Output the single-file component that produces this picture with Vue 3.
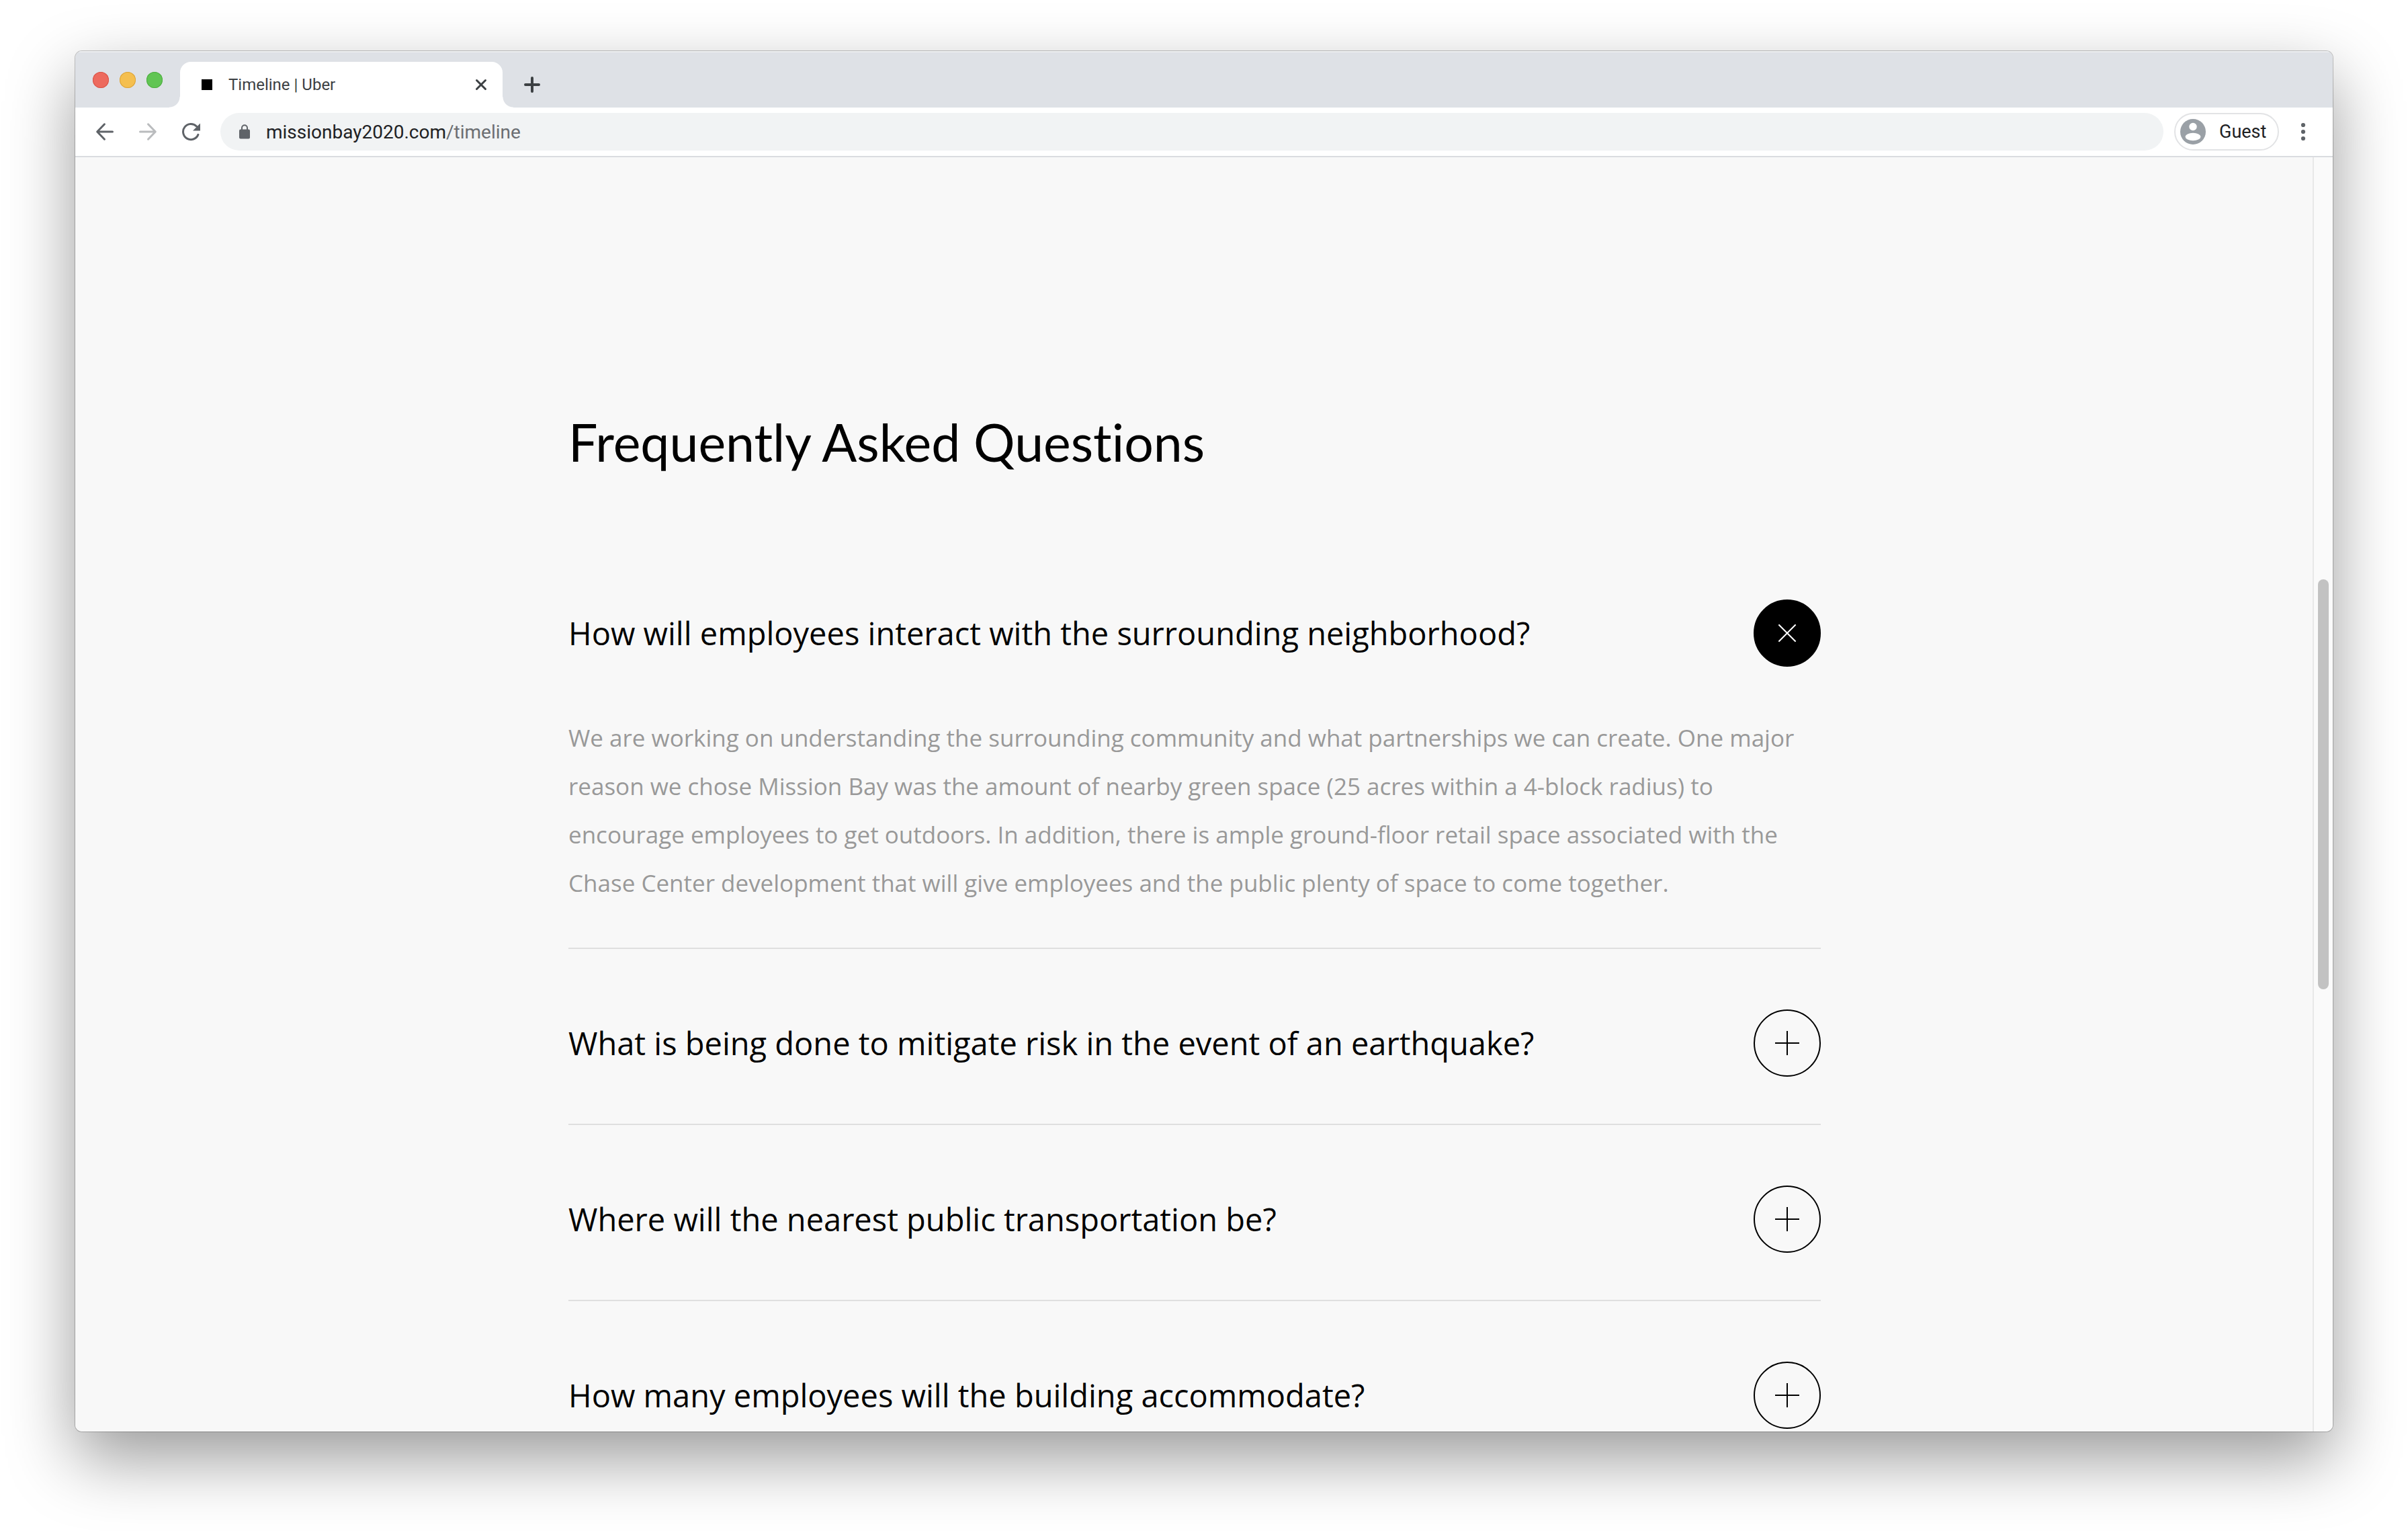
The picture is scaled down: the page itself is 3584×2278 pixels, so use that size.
<script setup>
import { ref } from 'vue'

const open = ref(0)
const items = [
  {
    question: 'How will employees interact with the surrounding neighborhood?',
    answer:
      'We are working on understanding the surrounding community and what partnerships we can create. One major reason we chose Mission Bay was the amount of nearby green space (25 acres within a 4-block radius) to encourage employees to get outdoors. In addition, there is ample ground-floor retail space associated with the Chase Center development that will give employees and the public plenty of space to come together.',
  },
  { question: 'What is being done to mitigate risk in the event of an earthquake?', answer: '' },
  { question: 'Where will the nearest public transportation be?', answer: '' },
  { question: 'How many employees will the building accommodate?', answer: '' },
]
function toggle(i) {
  open.value = open.value === i ? -1 : i
}
</script>

<template>
  <div class="desktop">
    <div class="window">
      <header class="tabstrip">
        <div class="lights">
          <button class="light red" aria-label="Close window"></button>
          <button class="light yellow" aria-label="Minimize window"></button>
          <button class="light green" aria-label="Zoom window"></button>
        </div>
        <div class="tab">
          <span class="favicon"></span>
          <span class="tab-title">Timeline | Uber</span>
          <button class="icon-btn" aria-label="Close tab">
            <svg width="20" height="20" viewBox="0 0 20 20"><path d="M3.500 3.500 16.500 16.500M16.500 3.500 3.500 16.500" stroke="#3c4043" stroke-width="3" stroke-linecap="round" /></svg>
          </button>
        </div>
        <button class="icon-btn new-tab" aria-label="New tab">
          <svg width="24" height="24" viewBox="0 0 24 24"><path d="M12 2V22M2 12H22" stroke="#3c4043" stroke-width="4" stroke-linecap="round" /></svg>
        </button>
      </header>

      <div class="toolbar">
        <nav class="nav">
          <button class="icon-btn" aria-label="Back">
            <svg width="28" height="28" viewBox="0 0 28 28" fill="none" stroke="#5f6368" stroke-width="3" stroke-linecap="round" stroke-linejoin="round"><path d="M25.500 14H3M13.500 2.800 2.700 14 13.500 25.200" /></svg>
          </button>
          <button class="icon-btn" aria-label="Forward">
            <svg width="28" height="28" viewBox="0 0 28 28" fill="none" stroke="#babcbe" stroke-width="3" stroke-linecap="round" stroke-linejoin="round"><path d="M2.500 14H25M14.500 2.800 25.300 14 14.500 25.200" /></svg>
          </button>
          <button class="icon-btn" aria-label="Reload">
            <svg width="28" height="28" viewBox="0 0 28 28"><path d="M22.500 6A11.600 11.600 0 1 0 24.900 18.400" fill="none" stroke="#5f6368" stroke-width="3" stroke-linecap="round" /><path d="M28 1.500V12.400H17Z" fill="#5f6368" /></svg>
          </button>
        </nav>
        <div class="omnibox">
          <svg width="16" height="22" viewBox="0 0 16 22"><rect y="7.500" width="16" height="14" rx="2" fill="#5f6368" /><path d="M4 9V5.200a4 4 0 0 1 8 0V9" fill="none" stroke="#5f6368" stroke-width="2" /></svg>
          <a class="url" href="#timeline">missionbay2020.com<span>/timeline</span></a>
        </div>
        <button class="profile">
          <svg width="38" height="38" viewBox="0 0 38 38"><circle cx="19" cy="19" r="19" fill="#9aa0a6" /><circle cx="19" cy="11.500" r="5.700" fill="#fff" /><ellipse cx="19" cy="26.500" rx="11.400" ry="5.700" fill="#fff" /></svg>
          <span>Guest</span>
        </button>
        <button class="icon-btn menu" aria-label="Menu">
          <svg width="8" height="28" viewBox="0 0 8 28" fill="#5f6368"><circle cx="4" cy="4" r="3.100" /><circle cx="4" cy="14" r="3.100" /><circle cx="4" cy="24" r="3.100" /></svg>
        </button>
      </div>

      <div class="viewport">
        <main class="page">
          <section class="faq">
            <h1>Frequently Asked Questions</h1>
            <article v-for="(item, i) in items" :key="item.question" class="item">
              <div class="row">
                <h2>{{ item.question }}</h2>
                <button class="toggle" :class="{ open: open === i }" :aria-expanded="open === i" :aria-label="item.question" @click="toggle(i)">
                  <svg width="36" height="36" viewBox="0 0 36 36" stroke="currentColor" stroke-width="2"><path d="M18 0V36M0 18H36" /></svg>
                </button>
              </div>
              <p v-if="open === i && item.answer">{{ item.answer }}</p>
            </article>
          </section>
        </main>
        <div class="track"><div class="thumb"></div></div>
      </div>
    </div>
  </div>
</template>

<style>
body {
  margin: 0;
  background: #fff;
}
</style>

<style scoped>
.desktop {
  box-sizing: border-box;
  height: 100vh;
  padding: 76px 112px 148px;
  overflow: hidden;
  font-family: Roboto, "Liberation Sans", sans-serif;
}
.window {
  display: flex;
  flex-direction: column;
  height: 100%;
  overflow: hidden;
  border-radius: 10px;
  background: #f8f8f8;
  box-shadow: 0 0 0 1px rgba(0, 0, 0, 0.22), 0 40px 100px rgba(0, 0, 0, 0.4);
}
button {
  margin: 0;
  padding: 0;
  border: 0;
  background: none;
  font: inherit;
}
svg {
  display: block;
}
.tabstrip {
  flex: none;
  display: flex;
  align-items: flex-end;
  height: 84px;
  background: #dee1e6;
  box-shadow: inset 0 2px 0 #eceef0;
}
.lights {
  display: flex;
  gap: 16px;
  width: 130px;
  padding: 0 0 29px 26px;
  box-sizing: border-box;
  margin-right: 26px;
}
.light {
  width: 24px;
  height: 24px;
  border-radius: 50%;
}
.red {
  background: #ed6a5e;
  box-shadow: inset 0 0 0 1px #d95448;
}
.yellow {
  background: #f5bf4f;
  box-shadow: inset 0 0 0 1px #dba33a;
}
.green {
  background: #61c554;
  box-shadow: inset 0 0 0 1px #4ead41;
}
.tab {
  position: relative;
  box-sizing: border-box;
  display: flex;
  align-items: center;
  width: 480px;
  height: 68px;
  padding: 0 22px 0 32px;
  border-radius: 16px 16px 0 0;
  background: #fff;
}
.tab::before,
.tab::after {
  content: "";
  position: absolute;
  bottom: 0;
  width: 16px;
  height: 16px;
}
.tab::before {
  right: 100%;
  background: radial-gradient(circle at 0 0, transparent 15px, #fff 16px);
}
.tab::after {
  left: 100%;
  background: radial-gradient(circle at 100% 0, transparent 15px, #fff 16px);
}
.favicon {
  width: 16px;
  height: 16px;
  background: #000;
}
.tab-title {
  flex: 1;
  margin-left: 24px;
  color: #3c4043;
  font-size: 24px;
}
.new-tab {
  margin: 0 0 22px 32px;
}
.toolbar {
  flex: none;
  display: flex;
  align-items: center;
  box-sizing: border-box;
  height: 74px;
  padding: 0 40px 0 30px;
  border-bottom: 2px solid #dadce0;
  background: #fff;
}
.nav {
  display: flex;
  gap: 36px;
  width: 186px;
}
.omnibox {
  flex: 1;
  display: flex;
  align-items: center;
  gap: 24px;
  height: 56px;
  padding: 0 28px;
  border-radius: 28px;
  background: #f1f3f4;
}
.url {
  color: #202124;
  font-size: 28px;
  text-decoration: none;
}
.url span {
  color: #6b6e72;
}
.profile {
  box-sizing: border-box;
  display: flex;
  align-items: center;
  gap: 20px;
  width: 156px;
  height: 56px;
  margin: 0 32px 0 16px;
  padding-left: 7px;
  border: 2px solid #e2e3e5;
  border-radius: 28px;
  color: #202124;
  font-size: 27px;
}
.viewport {
  flex: 1;
  min-height: 0;
  display: flex;
}
.page {
  flex: 1;
  overflow: hidden;
  background: #f8f8f8;
}
.faq {
  width: 56%;
  max-width: 1864px;
  margin: 0 auto;
  padding-top: 376px;
  color: #000;
  font-family: "Open Sans", sans-serif;
}
h1 {
  margin: 0 0 98px;
  font-family: Lato, sans-serif;
  font-size: 77px;
  font-weight: 400;
  font-variant-ligatures: none;
  line-height: 94px;
}
.item {
  padding: 90px 0 70px;
  border-bottom: 2px solid #dfdfdf;
}
.item:has(p) {
  padding-bottom: 60px;
}
.row {
  display: flex;
  align-items: center;
  justify-content: space-between;
}
h2 {
  margin: 0;
  font-size: 47px;
  font-weight: 400;
  line-height: 72px;
}
.toggle {
  box-sizing: border-box;
  display: grid;
  place-items: center;
  flex: none;
  width: 100px;
  height: 100px;
  border: 2px solid #000;
  border-radius: 50%;
  color: #000;
}
.toggle.open {
  background: #000;
  color: #fff;
}
.toggle.open svg {
  transform: rotate(45deg);
}
p {
  margin: 70px 0 0;
  color: #999;
  font-size: 35px;
  line-height: 72px;
}
.track {
  box-sizing: border-box;
  z-index: 1;
  width: 30px;
  margin-left: -2px;
  padding: 628px 6px 0;
  border-left: 2px solid #e8e8e8;
  background: #fafafa;
}
.thumb {
  width: 16px;
  height: 610px;
  border-radius: 8px;
  background: #c2c2c2;
}
</style>
